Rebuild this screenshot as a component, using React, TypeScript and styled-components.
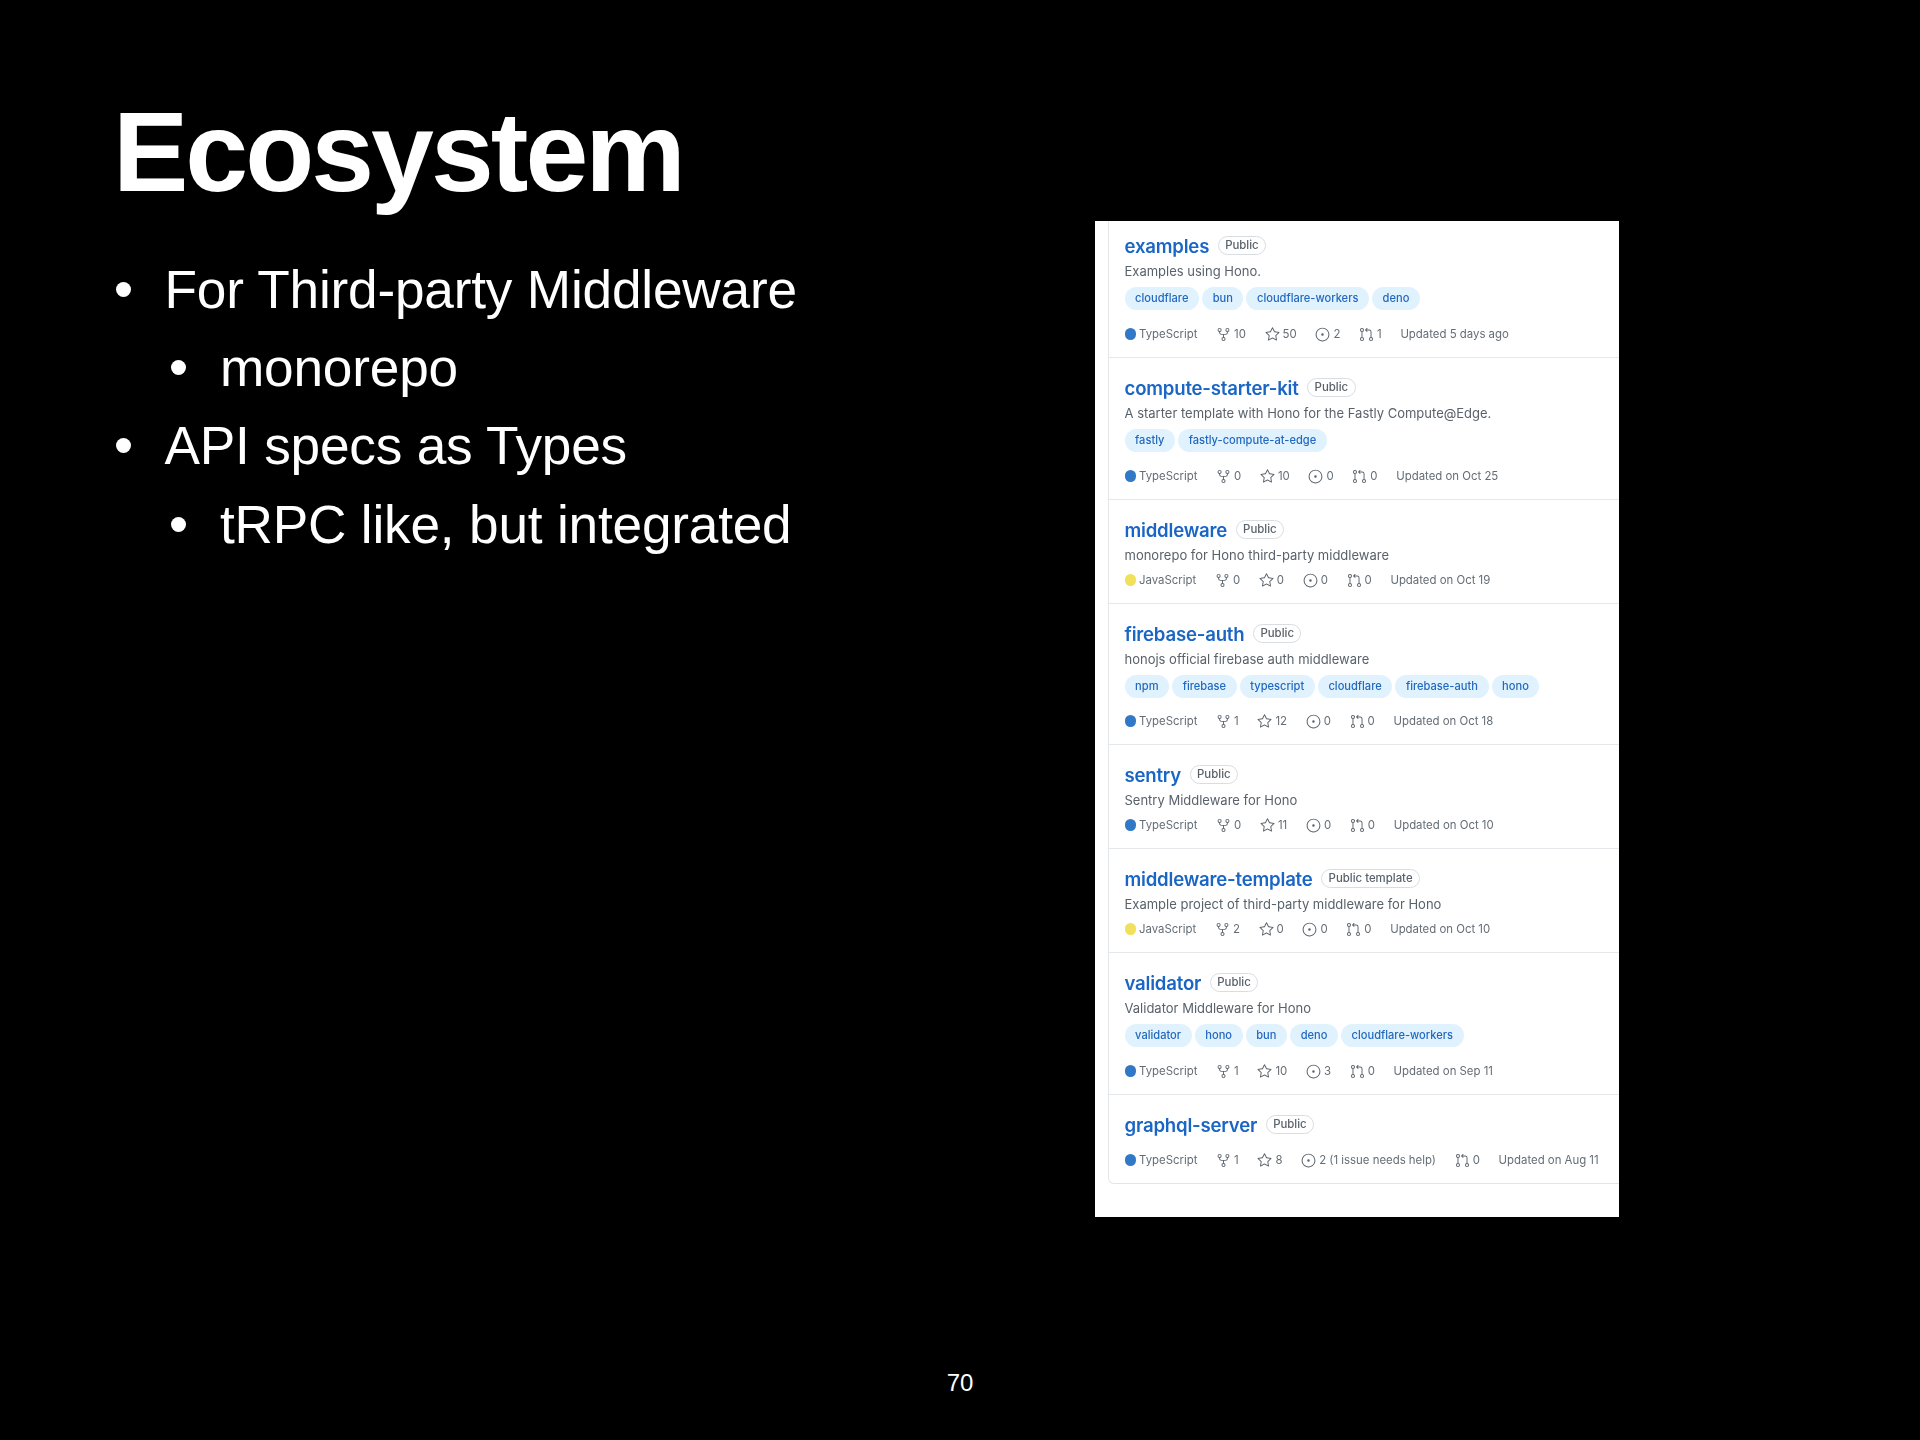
import * as React from "react"
import styled, { createGlobalStyle } from "styled-components"
import { GoRepoForked, GoStar, GoIssueOpened, GoGitPullRequest } from "react-icons/go"

const GlobalStyle = createGlobalStyle`
  html, body {
    margin: 0;
    background: #000;
  }
`

const Slide = styled.main`
  width: 1920px;
  height: 1440px;
  background: #000;
  color: #fff;
  font-family: "Liberation Sans", Arial, sans-serif;
  display: flex;
  flex-direction: column;
  overflow: hidden;
`

const Body = styled.div`
  flex: 1;
  display: flex;
  justify-content: space-between;
  align-items: flex-start;
`

const TextColumn = styled.section`
  padding: 92px 0 0 113px;
`

const Title = styled.h1`
  margin: 0 0 38px;
  font-size: 113px;
  line-height: 120px;
  font-weight: 700;
  letter-spacing: -3px;
`

const Bullets = styled.ul`
  margin: 0;
  padding: 0;
  list-style: none;
`

const Bullet = styled.li<{ $sub?: boolean }>`
  display: flex;
  align-items: center;
  height: 78.4px;
  font-size: 53.2px;
  padding-left: ${(p) => (p.$sub ? "58px" : "2.5px")};
  letter-spacing: -0.2px;
  white-space: nowrap;
`

const Marker = styled.span`
  flex: none;
  width: 15px;
  height: 15px;
  border-radius: 50%;
  background: #fff;
  margin-right: 34px;
`

const Panel = styled.section`
  width: 524px;
  height: 996px;
  margin: 221px 301px 0 0;
  background: #fff;
  overflow: hidden;
  padding-left: 13px;
  box-sizing: border-box;
  font-family: Inter, "Liberation Sans", sans-serif;
`

const RepoList = styled.div`
  margin-top: -5px;
  border-left: 1px solid #e4e7ea;
  border-bottom: 1px solid #e1e4e8;
  border-bottom-left-radius: 6px;
  filter: blur(0.3px);
`

const Row = styled.article<{ $height: number }>`
  height: ${(p) => p.$height}px;
  box-sizing: border-box;
  padding: 18.5px 0 0 15.5px;
  display: flex;
  flex-direction: column;
  border-bottom: 1px solid #e6e8eb;
  &:last-child {
    border-bottom: 0;
  }
`

const NameLine = styled.div`
  display: flex;
  align-items: center;
  gap: 8.5px;
  height: 22px;
`

const RepoName = styled.a`
  color: #1a66c5;
  font-size: 18.6px;
  font-weight: 600;
  letter-spacing: -0.2px;
`

const Badge = styled.span`
  font-size: 11.4px;
  font-weight: 500;
  line-height: 17px;
  color: #59626b;
  border: 1px solid #d8dde2;
  border-radius: 10px;
  padding: 0 6.5px;
`

const Description = styled.p`
  margin: 5px 0 0;
  font-size: 13px;
  line-height: 18px;
  color: #59626b;
`

const Topics = styled.div`
  display: flex;
  gap: 3px;
  margin-top: 7px;
`

const Topic = styled.span`
  font-size: 11.1px;
  font-weight: 500;
  line-height: 23px;
  padding: 0 10.6px;
  border-radius: 12px;
  background: #e0f2fd;
  color: #2268c0;
`

const Meta = styled.div`
  display: flex;
  align-items: center;
  gap: 18.7px;
  margin-top: auto;
  margin-bottom: 14px;
  height: 18px;
  font-size: 11.4px;
  color: #646d76;
  white-space: nowrap;
`

const MetaItem = styled.span`
  display: flex;
  align-items: center;
  gap: 3px;
  svg {
    width: 15px;
    height: 15px;
    color: #59626b;
  }
`

const LangDot = styled.span<{ $color: string }>`
  width: 11.5px;
  height: 11.5px;
  border-radius: 50%;
  background: ${(p) => p.$color};
`

const PageNumber = styled.footer`
  text-align: center;
  font-size: 24px;
  line-height: 30px;
  padding-bottom: 42px;
`

type Repo = {
  name: string
  badge?: string
  description?: string
  topics?: string[]
  lang: "TypeScript" | "JavaScript"
  forks: number
  stars: number
  issues: string
  pulls: number
  updated: string
  height: number
}

const repos: Repo[] = [
  {
    name: "examples",
    description: "Examples using Hono.",
    topics: ["cloudflare", "bun", "cloudflare-workers", "deno"],
    lang: "TypeScript",
    forks: 10,
    stars: 50,
    issues: "2",
    pulls: 1,
    updated: "Updated 5 days ago",
    height: 142,
  },
  {
    name: "compute-starter-kit",
    description: "A starter template with Hono for the Fastly Compute@Edge.",
    topics: ["fastly", "fastly-compute-at-edge"],
    lang: "TypeScript",
    forks: 0,
    stars: 10,
    issues: "0",
    pulls: 0,
    updated: "Updated on Oct 25",
    height: 142,
  },
  {
    name: "middleware",
    description: "monorepo for Hono third-party middleware",
    lang: "JavaScript",
    forks: 0,
    stars: 0,
    issues: "0",
    pulls: 0,
    updated: "Updated on Oct 19",
    height: 104,
  },
  {
    name: "firebase-auth",
    description: "honojs official firebase auth middleware",
    topics: ["npm", "firebase", "typescript", "cloudflare", "firebase-auth", "hono"],
    lang: "TypeScript",
    forks: 1,
    stars: 12,
    issues: "0",
    pulls: 0,
    updated: "Updated on Oct 18",
    height: 141,
  },
  {
    name: "sentry",
    description: "Sentry Middleware for Hono",
    lang: "TypeScript",
    forks: 0,
    stars: 11,
    issues: "0",
    pulls: 0,
    updated: "Updated on Oct 10",
    height: 104,
  },
  {
    name: "middleware-template",
    badge: "Public template",
    description: "Example project of third-party middleware for Hono",
    lang: "JavaScript",
    forks: 2,
    stars: 0,
    issues: "0",
    pulls: 0,
    updated: "Updated on Oct 10",
    height: 104,
  },
  {
    name: "validator",
    description: "Validator Middleware for Hono",
    topics: ["validator", "hono", "bun", "deno", "cloudflare-workers"],
    lang: "TypeScript",
    forks: 1,
    stars: 10,
    issues: "3",
    pulls: 0,
    updated: "Updated on Sep 11",
    height: 142,
  },
  {
    name: "graphql-server",
    lang: "TypeScript",
    forks: 1,
    stars: 8,
    issues: "2 (1 issue needs help)",
    pulls: 0,
    updated: "Updated on Aug 11",
    height: 88,
  },
]

const langColor = { TypeScript: "#3178c6", JavaScript: "#f1e05a" }

const App = () => {
  return (
    <Slide>
      <GlobalStyle />
      <Body>
        <TextColumn>
          <Title>Ecosystem</Title>
          <Bullets>
            <Bullet>
              <Marker />
              For Third-party Middleware
            </Bullet>
            <Bullet $sub>
              <Marker />
              monorepo
            </Bullet>
            <Bullet>
              <Marker />
              API specs as Types
            </Bullet>
            <Bullet $sub>
              <Marker />
              tRPC like, but integrated
            </Bullet>
          </Bullets>
        </TextColumn>
        <Panel>
          <RepoList>
            {repos.map((repo) => (
              <Row key={repo.name} $height={repo.height}>
                <NameLine>
                  <RepoName>{repo.name}</RepoName>
                  <Badge>{repo.badge ?? "Public"}</Badge>
                </NameLine>
                {repo.description && <Description>{repo.description}</Description>}
                {repo.topics && (
                  <Topics>
                    {repo.topics.map((topic) => (
                      <Topic key={topic}>{topic}</Topic>
                    ))}
                  </Topics>
                )}
                <Meta>
                  <MetaItem>
                    <LangDot $color={langColor[repo.lang]} />
                    {repo.lang}
                  </MetaItem>
                  <MetaItem>
                    <GoRepoForked />
                    {repo.forks}
                  </MetaItem>
                  <MetaItem>
                    <GoStar />
                    {repo.stars}
                  </MetaItem>
                  <MetaItem>
                    <GoIssueOpened />
                    {repo.issues}
                  </MetaItem>
                  <MetaItem>
                    <GoGitPullRequest />
                    {repo.pulls}
                  </MetaItem>
                  <span>{repo.updated}</span>
                </Meta>
              </Row>
            ))}
          </RepoList>
        </Panel>
      </Body>
      <PageNumber>70</PageNumber>
    </Slide>
  )
}

export default App
